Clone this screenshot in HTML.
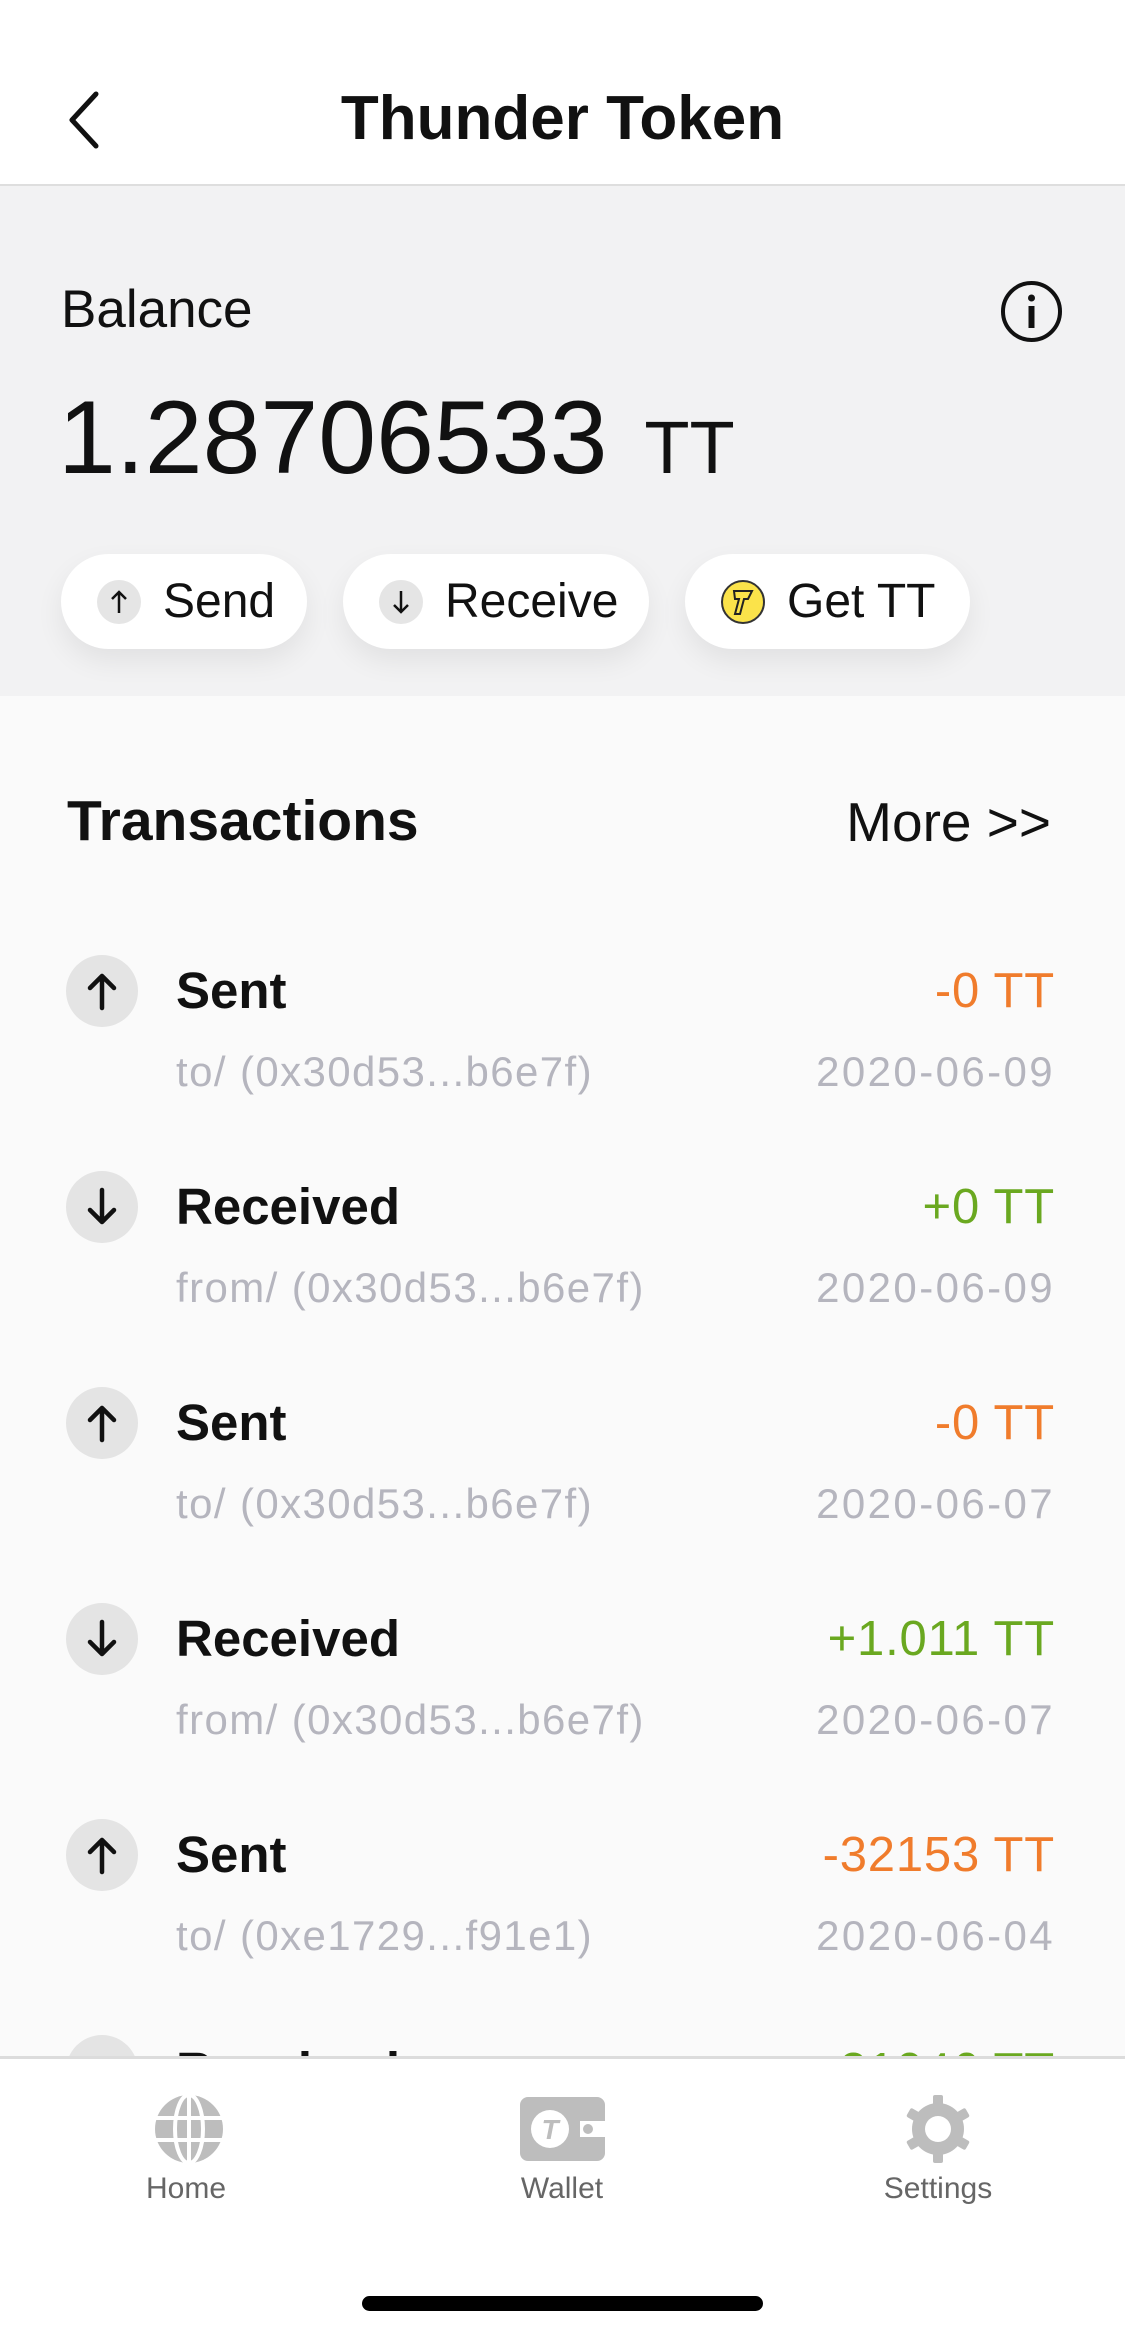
<!DOCTYPE html>
<html><head><meta charset="utf-8"><style>
*{margin:0;padding:0;box-sizing:border-box}
body{width:1125px;height:2335px;position:relative;overflow:hidden;background:#fafafa;font-family:"Liberation Sans",sans-serif;color:#111}
.abs{position:absolute}
.hdr{left:0;top:0;width:1125px;height:186px;background:#fff;border-bottom:2px solid #dedede}
.title{left:0;width:1125px;top:84px;text-align:center;font-size:62px;font-weight:bold;line-height:70px}
.gray{left:0;top:186px;width:1125px;height:510px;background:#f2f2f3}
.btn{top:554px;height:95px;background:#fff;border-radius:48px;box-shadow:0 12px 28px rgba(0,0,0,0.07);display:flex;align-items:center;font-size:48px}
.bi{width:44px;height:44px;border-radius:50%;background:#e5e5e5;margin:0 22px 0 36px;display:flex;align-items:center;justify-content:center}
.row{left:0;width:1125px;height:216px}
.ic{position:absolute;left:66px;top:0;width:72px;height:72px;border-radius:50%;background:#e4e4e4;display:flex;align-items:center;justify-content:center}
.t{position:absolute;left:176px;top:0;font-size:51px;font-weight:bold;line-height:72px}
.s{position:absolute;left:176px;top:92px;font-size:42px;letter-spacing:1.4px;color:#b5b5be;line-height:50px}
.a{position:absolute;right:70px;top:0;font-size:49px;letter-spacing:0.8px;line-height:72px}
.d{position:absolute;right:70px;top:92px;font-size:42px;letter-spacing:2.4px;color:#b5b5be;line-height:50px}
.o{color:#f07c2c}.g{color:#6aa820}
.tab{left:0;top:2056px;width:1125px;height:279px;background:#fff;border-top:3px solid #dcdcdc}
.tl{position:absolute;top:2172px;font-size:30px;color:#666;width:200px;text-align:center}
</style></head><body>
<div class="abs hdr"></div>
<svg class="abs" style="left:64px;top:90px" width="40" height="60" viewBox="0 0 40 60"><path d="M32 4 L8 30 L32 56" fill="none" stroke="#111" stroke-width="5" stroke-linecap="round" stroke-linejoin="round"/></svg>
<div class="abs title">Thunder Token</div>
<div class="abs gray"></div>
<div class="abs" style="left:61px;top:280px;font-size:53px;line-height:60px">Balance</div>
<svg class="abs" style="left:1000px;top:280px" width="63" height="63" viewBox="0 0 63 63"><circle cx="31.5" cy="31.5" r="28.5" fill="none" stroke="#111" stroke-width="4"/><circle cx="31.5" cy="18" r="3.5" fill="#111"/><rect x="28.5" y="26" width="6" height="22" fill="#111"/></svg>
<div class="abs" style="left:58px;top:378px;font-size:104px;line-height:120px">1.28706533 <span style="font-size:74px;margin-left:8px">TT</span></div>
<div class="abs btn" style="left:61px;width:246px"><div class="bi"><svg width="20" height="26" viewBox="0 0 20 26"><path d="M10 24V3M3 10l7-7 7 7" fill="none" stroke="#111" stroke-width="2.5"/></svg></div>Send</div>
<div class="abs btn" style="left:343px;width:306px"><div class="bi"><svg width="20" height="26" viewBox="0 0 20 26"><path d="M10 2v21M3 16l7 7 7-7" fill="none" stroke="#111" stroke-width="2.5"/></svg></div>Receive</div>
<div class="abs btn" style="left:685px;width:285px"><div class="bi" style="background:#fbe34a;border:2px solid #333"><svg width="26" height="30" viewBox="0 0 26 30"><path d="M4 4h18l-4 8h-4l-4 15h-5l4-15H5z" fill="none" stroke="#222" stroke-width="2"/></svg></div>Get TT</div>
<div class="abs" style="left:67px;top:788px;font-size:57px;font-weight:bold;line-height:66px">Transactions</div>
<div class="abs" style="right:74px;top:790px;font-size:55px;line-height:64px">More &gt;&gt;</div>

<div class="abs row" style="top:955px"><div class="ic"><svg width="34" height="40" viewBox="0 0 34 40"><path d="M17 37V5M5 17L17 5l12 12" fill="none" stroke="#111" stroke-width="4.5" stroke-linecap="round" stroke-linejoin="round"/></svg></div><div class="t">Sent</div><div class="s">to/ (0x30d53...b6e7f)</div><div class="a o">-0 TT</div><div class="d">2020-06-09</div></div>
<div class="abs row" style="top:1171px"><div class="ic"><svg width="34" height="40" viewBox="0 0 34 40"><path d="M17 3v32M5 23l12 12 12-12" fill="none" stroke="#111" stroke-width="4.5" stroke-linecap="round" stroke-linejoin="round"/></svg></div><div class="t">Received</div><div class="s">from/ (0x30d53...b6e7f)</div><div class="a g">+0 TT</div><div class="d">2020-06-09</div></div>
<div class="abs row" style="top:1387px"><div class="ic"><svg width="34" height="40" viewBox="0 0 34 40"><path d="M17 37V5M5 17L17 5l12 12" fill="none" stroke="#111" stroke-width="4.5" stroke-linecap="round" stroke-linejoin="round"/></svg></div><div class="t">Sent</div><div class="s">to/ (0x30d53...b6e7f)</div><div class="a o">-0 TT</div><div class="d">2020-06-07</div></div>
<div class="abs row" style="top:1603px"><div class="ic"><svg width="34" height="40" viewBox="0 0 34 40"><path d="M17 3v32M5 23l12 12 12-12" fill="none" stroke="#111" stroke-width="4.5" stroke-linecap="round" stroke-linejoin="round"/></svg></div><div class="t">Received</div><div class="s">from/ (0x30d53...b6e7f)</div><div class="a g">+1.011 TT</div><div class="d">2020-06-07</div></div>
<div class="abs row" style="top:1819px"><div class="ic"><svg width="34" height="40" viewBox="0 0 34 40"><path d="M17 37V5M5 17L17 5l12 12" fill="none" stroke="#111" stroke-width="4.5" stroke-linecap="round" stroke-linejoin="round"/></svg></div><div class="t">Sent</div><div class="s">to/ (0xe1729...f91e1)</div><div class="a o">-32153 TT</div><div class="d">2020-06-04</div></div>
<div class="abs row" style="top:2035px"><div class="ic"></div><div class="t">Received</div><div class="a g">+31046 TT</div></div>

<div class="abs tab"></div>
<svg class="abs" style="left:153px;top:2093px" width="72" height="72" viewBox="0 0 72 72"><circle cx="36" cy="36" r="34" fill="#bdbdbd"/><g stroke="#fff" stroke-width="4" fill="none"><ellipse cx="36" cy="36" rx="14" ry="34"/><line x1="36" y1="0" x2="36" y2="72"/><line x1="0" y1="25" x2="72" y2="25"/><line x1="0" y1="47" x2="72" y2="47"/></g></svg>
<div class="tl" style="left:86px">Home</div>
<svg class="abs" style="left:520px;top:2097px" width="85" height="64" viewBox="0 0 85 64"><rect x="0" y="0" width="85" height="64" rx="8" fill="#bdbdbd"/><circle cx="30" cy="32" r="19" fill="#fff"/><text x="30" y="42" text-anchor="middle" font-family="Liberation Sans" font-weight="bold" font-style="italic" font-size="28" fill="#bdbdbd">T</text><rect x="60" y="24" width="25" height="16" fill="#fff"/><circle cx="68" cy="32" r="5" fill="#bdbdbd"/></svg>
<div class="tl" style="left:462px">Wallet</div>
<svg class="abs" style="left:904px;top:2095px" width="68" height="68" viewBox="0 0 68 68"><g fill="#bdbdbd"><circle cx="34" cy="34" r="26"/><g id="t"><rect x="29" y="0" width="10" height="14" rx="2"/><rect x="29" y="54" width="10" height="14" rx="2"/></g><use href="#t" transform="rotate(60 34 34)"/><use href="#t" transform="rotate(120 34 34)"/></g><circle cx="34" cy="34" r="13" fill="#fff"/></svg>
<div class="tl" style="left:838px">Settings</div>
<div class="abs" style="left:362px;top:2296px;width:401px;height:15px;border-radius:8px;background:#000"></div>
</body></html>
